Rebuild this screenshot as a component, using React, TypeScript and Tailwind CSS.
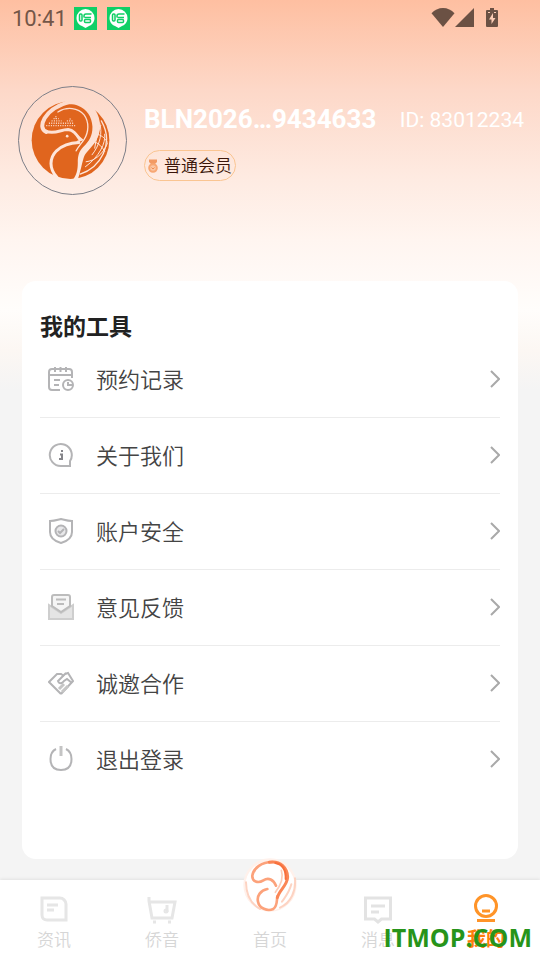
import type { ReactNode } from 'react'

function Wifi() {
  return (
    <svg width="24" height="20" viewBox="0 0 24 20" fill="#6b5144" aria-hidden>
      <path d="M12 19 .5 5.200C3.500 2 7.500 0 12 0s8.500 2 11.500 5.200z" />
    </svg>
  )
}

function Signal() {
  return (
    <svg width="20" height="20" viewBox="0 0 20 20" fill="#6b5144" aria-hidden>
      <path d="M19 0v19H0z" />
    </svg>
  )
}

function Battery() {
  return (
    <svg width="12" height="20" viewBox="0 0 12 20" aria-hidden>
      <path d="M4 0h4v2h3a1 1 0 0 1 1 1v15a1 1 0 0 1-1 1H1a1 1 0 0 1-1-1V3a1 1 0 0 1 1-1h3z" fill="#6b5144" />
      <path d="M7 5v5h2.500L5.500 16v-4.500H3zM2 4h2v1H2zM8 4h2v1H8z" fill="#fdcdb5" />
    </svg>
  )
}

/* Green notification badge in the status bar */
function ChatBadge() {
  return (
    <svg width="23" height="23" viewBox="0 0 23 23" fill="none" aria-hidden>
      <rect width="23" height="23" fill="#0fcf66" />
      <path d="M11.500 2a9 9 0 0 1 9 9c0 4-2.500 7-5.500 8l-3.500 2L8 19c-3-1-5.500-4-5.500-8a9 9 0 0 1 9-9z" fill="#fff" />
      <g stroke="#0fcf66" strokeWidth="1.500">
        <rect x="5.500" y="7" width="2.500" height="7" rx="1" />
        <path d="M10 10.500V9a2 2 0 0 1 2-2h5.500M10.500 10.500h6.500" />
        <rect x="10.500" y="12.500" width="6" height="3" rx="1" />
      </g>
    </svg>
  )
}

function SwanLogo() {
  return (
    <svg viewBox="64 64 238 238" className="size-[79px]" fill="none" aria-hidden>
      <mask id="swan" maskUnits="userSpaceOnUse" x="60" y="60" width="250" height="250">
        <circle cx="183" cy="182" r="117" fill="#fff" />
        {/* gap between the neck and the globe, open to the rim at the top */}
        <path
          d="M178 58L256 62L257 90C272 112 276 140 268 166C260 192 240 208 228 224C219 238 218 262 204 304L190 302C202 286 205 270 205 250C205 230 208 216 222 202C240 184 250 168 249 140C248 112 232 88 206 78C192 73 172 72 156 78Z"
          fill="#000"
        />
        <g stroke="#000" strokeLinecap="round" strokeLinejoin="round">
          <path d="M182 66C146 76 118 94 105 116C94 136 96 150 110 157" strokeWidth="12" />
          <path d="M108 155C136 166 152 150 176 150C192 152 200 164 210 178" strokeWidth="9" />
          <path d="M202 168L219 181L204 186" strokeWidth="5" />
          {/* breast */}
          <path d="M208 189C184 190 158 198 141 214C119 236 118 268 142 294" strokeWidth="9" />
          {/* inner neck line */}
          <path d="M145 97C172 80 206 84 224 106C240 128 238 158 224 180C216 192 206 202 200 214" strokeWidth="4" />
          {/* globe grid */}
          <g strokeWidth="3">
            <path d="M271 130C280 160 272 196 248 226M286 164C290 190 270 232 228 262M230 247C256 244 280 226 294 192M252 186C268 190 280 204 286 216M262 164C274 166 286 174 294 188M274 138C264 160 260 180 256 206" />
          </g>
          <path d="M276 124C294 156 296 192 282 222C266 256 238 276 212 284" strokeWidth="4" />
          <g strokeWidth="4" strokeDasharray="3 4" strokeLinecap="butt">
            <path d="M110 138H200M118 131H192M126 124H156M172 124H190M132 117H148M139 110V118M182 117V123" />
          </g>
        </g>
        <circle cx="173" cy="170" r="4" fill="#000" />
      </mask>
      <rect x="60" y="60" width="250" height="250" fill="#e0651e" mask="url(#swan)" />
    </svg>
  )
}

function Medal() {
  return (
    <svg width="10" height="14" viewBox="0 0 10 14" fill="none" aria-hidden>
      <path d="M1 .5h8V3L7 5H3L1 3z" fill="#f29a63" />
      <circle cx="5" cy="9" r="3.800" stroke="#f7a773" strokeWidth="2" fill="#fbc6a3" />
      <path d="M3.500 8.500 5 10l1.500-1.500" stroke="#ef8c4f" />
    </svg>
  )
}

function CalendarIcon() {
  return (
    <>
      <path d="M12 24H4a3 3 0 0 1-3-3V6a3 3 0 0 1 3-3h17a3 3 0 0 1 3 3v6M1 9h23M7 1v5M12.500 1v5M18 1v5M6 14h6M6 19h5" />
      <circle cx="20" cy="19" r="5" />
      <path d="M20 16v3h4" />
    </>
  )
}

function AboutIcon() {
  return (
    <>
      <path d="M22 24h-9A11 11 0 1 1 22 19z" />
      <path d="M14 8v2M12 12.500h2V18M11 17h3" stroke="#85858a" />
    </>
  )
}

function ShieldIcon() {
  return (
    <>
      <path d="M13 1c4 1 7 2 11 2v11c0 5-4 9-11 11C6 23 2 19 2 14V3c4 0 7-1 11-2z" />
      <circle cx="13" cy="13" r="5.500" fill="#e8e8ea" />
      <path d="m10 13 2 2 4-4" />
    </>
  )
}

function MailIcon() {
  return (
    <>
      <path d="M1 11v14h24V11l-12 8z" fill="#e4e4e4" stroke="#cecece" />
      <path d="M4 12V3a2 2 0 0 1 2-2h14a2 2 0 0 1 2 2v9l-9 6z" fill="#f5f5f5" stroke="#bcbcbc" />
      <path d="M8 5.500h10M9 10h7" stroke="#bcbcbc" />
    </>
  )
}

function HandshakeIcon() {
  return (
    <>
      <path d="M13 24 1 12l8-8h4l3 2M17 4l3-1 5 8-12 13" />
      <path d="m18 3-8 8c1 3 4 3 6 0l3-2 5 4" />
      <path d="m11 19 5-5M14 22l6-6" strokeWidth="3" stroke="#c6c6c6" />
    </>
  )
}

function PowerIcon() {
  return (
    <>
      <path d="M8 3C4 5 2.500 9 2.500 13c0 7 3.500 11 10.500 11s10.500-4 10.500-11c0-4-1.500-8-5.500-10" />
      <path d="M13 0v10" strokeWidth="3" stroke="#c4c4c4" />
    </>
  )
}

type Tool = { label: string; icon: ReactNode }

const TOOLS: Tool[] = [
  { label: '预约记录', icon: <CalendarIcon /> },
  { label: '关于我们', icon: <AboutIcon /> },
  { label: '账户安全', icon: <ShieldIcon /> },
  { label: '意见反馈', icon: <MailIcon /> },
  { label: '诚邀合作', icon: <HandshakeIcon /> },
  { label: '退出登录', icon: <PowerIcon /> },
]

function Chevron() {
  return (
    <svg width="10" height="18" viewBox="0 0 10 18" fill="none" stroke="#a9a9a9" strokeWidth="2" aria-hidden>
      <path d="m1 1 8 8-8 8" />
    </svg>
  )
}

function ToolRow({ label, icon }: Tool) {
  return (
    <li className="border-b border-[#ececec] last:border-transparent">
      <button type="button" className="flex h-[75px] w-full items-center pb-[2px] pl-2 text-left">
        <svg width="26" height="26" viewBox="0 0 26 26" fill="none" stroke="#b4b4b6" strokeWidth="2" aria-hidden>
          {icon}
        </svg>
        <span className="ml-[22px] flex-1 pt-1 text-[22px] leading-8 font-[350] text-[#444]">{label}</span>
        <Chevron />
      </button>
    </li>
  )
}

function NewsIcon() {
  return (
    <svg width="30" height="28" viewBox="0 0 30 28" fill="none" stroke="#e6e6e6" strokeWidth="3" aria-hidden>
      <path d="M3 2h18c3 0 6 3 6 6v16H8c-3 0-5-2-5-5z" />
      <path d="M8 9h11M8 14h7" />
    </svg>
  )
}

function CartIcon() {
  return (
    <svg width="30" height="28" viewBox="0 0 30 28" fill="none" stroke="#e6e6e6" strokeWidth="3" aria-hidden>
      <path d="M2 1v4l3 17h20l3-16H3" />
      <path d="M20 9v7" />
      <circle cx="19" cy="15" r="1" />
      <path d="M6 26h3M21 26h3" />
    </svg>
  )
}

function MessageIcon() {
  return (
    <svg width="30" height="28" viewBox="0 0 30 28" fill="none" stroke="#e3e3e3" strokeWidth="3" aria-hidden>
      <path d="M2.500 2h25v21h-9L15 26l-3.500-3h-9z" />
      <path d="M8 10h14M8 16h8" />
    </svg>
  )
}

function ProfileIcon() {
  return (
    <svg width="30" height="30" viewBox="0 0 30 30" fill="none" stroke="#ff9428" strokeWidth="3" aria-hidden>
      <circle cx="15" cy="12" r="10.500" />
      <path d="M11 17h8M6 26.500h18" />
    </svg>
  )
}

function HomeSwan() {
  return (
    <svg width="54" height="54" viewBox="51 47 162 162" fill="none" strokeLinecap="round" aria-hidden>
      <circle cx="132" cy="128" r="80" fill="#fff1eb" />
      <circle cx="132" cy="130" r="74" fill="#fff" />
      <path d="M60 120C60 156 74 184 102 200M207 108C210 146 196 180 162 196M196 126C190 150 178 164 168 178" stroke="#fdd3c2" strokeWidth="6" />
      <path d="M150 130C142 112 128 104 112 114C96 124 78 118 79 100C82 78 108 58 140 59" stroke="#fca27b" strokeWidth="8" />
      <path d="M124 140C104 144 92 160 96 178C100 198 124 208 142 200C154 192 152 176 154 162" stroke="#fca27b" strokeWidth="8" />
      <path d="M166 84C174 108 162 132 148 150" stroke="#fdcbb6" strokeWidth="5" />
      <path d="M130 60C164 54 184 78 185 104C184 130 160 142 154 166" stroke="#fa8656" strokeWidth="9" />
      <path d="M148 62C170 66 180 84 179 110" stroke="#f86f3c" strokeWidth="6" />
    </svg>
  )
}

function Tab({ label, children, active }: { label: string; children: ReactNode; active?: boolean }) {
  return (
    <a href="#" className="flex flex-1 flex-col items-center justify-end pb-2" aria-current={active ? 'page' : undefined}>
      {children}
      <span
        className={
          active
            ? 'mt-1 text-[19px] leading-6 font-bold text-[#ff7d0a]'
            : 'mt-1 text-[17px] leading-6 font-[350] text-[#d6d6d6]'
        }
      >
        {label}
      </span>
    </a>
  )
}

export default function App() {
  return (
    <div className="relative flex min-h-screen flex-col bg-[#f4f4f4] bg-[linear-gradient(180deg,#febfa1_0px,#fdd8c8_90px,#feebe2_180px,#fff5f0_240px,#fffdfb_310px,#fcf7f3_350px,#f4f4f4_390px)] font-[Roboto,'Noto_Sans_CJK_SC',sans-serif]">
      <div className="flex h-9 items-center pr-[42px] pl-3">
        <span className="pt-[2px] text-[22px] leading-7 text-[#735648]">10:41</span>
        <div className="ml-[7px] flex gap-[10px]">
          <ChatBadge />
          <ChatBadge />
        </div>
        <div className="ml-auto flex items-center">
          <Wifi />
          <Signal />
          <span className="ml-[11px] flex">
            <Battery />
          </span>
        </div>
      </div>

      <header className="mt-[50px] flex items-center pr-4 pl-[18px]">
        <div className="flex size-[109px] shrink-0 items-center justify-center rounded-full border border-[#7d7f88] pr-1">
          <SwanLogo />
        </div>
        <div className="ml-[17px] min-w-0 flex-1">
          <div className="flex items-center justify-between text-white">
            <h1 className="text-[26px] leading-[38px] font-bold whitespace-nowrap">BLN2026…9434633</h1>
            <span className="pt-[2px] text-[21px] leading-[36px] whitespace-nowrap">ID: 83012234</span>
          </div>
          <div className="mt-3 inline-flex h-[31px] items-center gap-[6px] rounded-full border border-[#fac592] px-[3px] align-top">
            <Medal />
            <span className="text-[17px] leading-6 font-[350] whitespace-nowrap text-[#3a1509]">普通会员</span>
          </div>
        </div>
      </header>

      <main className="mx-[22px] mt-[86px] mb-[21px] flex-1 rounded-[14px] bg-white px-[18px] pt-[33px]">
        <h2 className="text-[23px] leading-7 font-bold text-[#222]">我的工具</h2>
        <ul>
          {TOOLS.map((tool) => (
            <ToolRow key={tool.label} {...tool} />
          ))}
        </ul>
      </main>

      <nav className="flex h-20 bg-white shadow-[0_-1px_3px_rgba(0,0,0,0.08)]">
        <Tab label="资讯"><NewsIcon /></Tab>
        <Tab label="侨音"><CartIcon /></Tab>
        <Tab label="首页">
          <span className="mb-3"><HomeSwan /></span>
        </Tab>
        <Tab label="消息"><MessageIcon /></Tab>
        <Tab label="我的" active><ProfileIcon /></Tab>
      </nav>

      <span className="absolute right-2 bottom-[5px] font-['Open_Sans',sans-serif] text-[25px] leading-9 font-bold text-[#27941a]">
        ITMOP.COM
      </span>
    </div>
  )
}
